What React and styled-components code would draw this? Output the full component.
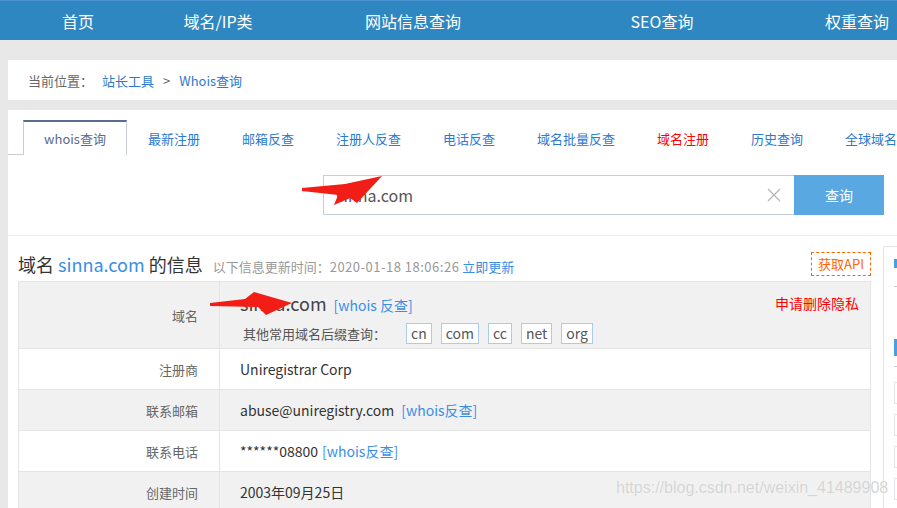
import React from 'react'
import styled, { createGlobalStyle } from 'styled-components'

const GlobalStyle = createGlobalStyle`
  html, body {
    margin: 0;
    padding: 0;
    background: #e8e8e8;
    overflow: hidden;
    font-family: "Microsoft YaHei", "Noto Sans CJK SC", sans-serif;
  }
`

const navItems = [
  { label: '首页', width: 156 },
  { label: '域名/IP类', width: 124 },
  { label: '网站信息查询', width: 266 },
  { label: 'SEO查询', width: 232 },
  { label: '权重查询', width: 158 },
]

const tabs = [
  { label: 'whois查询', active: true },
  { label: '最新注册' },
  { label: '邮箱反查' },
  { label: '注册人反查' },
  { label: '电话反查' },
  { label: '域名批量反查' },
  { label: '域名注册', hot: true },
  { label: '历史查询' },
  { label: '全球域名' },
]

const suffixes = ['cn', 'com', 'cc', 'net', 'org']

export default function App() {
  return (
    <Page>
      <GlobalStyle />
      <TopNav>
        {navItems.map(item => (
          <NavItem key={item.label} $w={item.width}>{item.label}</NavItem>
        ))}
      </TopNav>

      <Wrap>
        <Breadcrumb>
          <Crumb>当前位置：</Crumb>
          <CrumbLink>站长工具</CrumbLink>
          <Crumb>&gt;</Crumb>
          <CrumbLink>Whois查询</CrumbLink>
        </Breadcrumb>

        <Panel>
          <TabBar>
            {tabs.map(t => (
              <Tab key={t.label} $active={t.active} $hot={t.hot}>{t.label}</Tab>
            ))}
          </TabBar>

          <SearchRow>
            <InputBox>
              <SearchText>sinna.com</SearchText>
              <svg width="14" height="14" viewBox="0 0 14 14">
                <path d="M1 1 L13 13 M13 1 L1 13" stroke="#b5b5b5" strokeWidth="1.2" fill="none" />
              </svg>
            </InputBox>
            <SearchButton>查询</SearchButton>
          </SearchRow>

          <Content>
            <Main>
              <TitleRow>
                <Title>
                  域名 <Blue>sinna.com</Blue> 的信息
                  <SubTitle>以下信息更新时间：<Stamp>2020-01-18 18:06:26</Stamp> <Blue>立即更新</Blue></SubTitle>
                </Title>
                <ApiButton>获取API</ApiButton>
              </TitleRow>

              <InfoTable>
                <Row $alt>
                  <Label>域名</Label>
                  <Value $tall>
                    <DomainLine>
                      <span>
                        <Domain>sinna.com</Domain>
                        <SmallLink>[whois 反查]</SmallLink>
                      </span>
                      <Privacy>申请删除隐私</Privacy>
                    </DomainLine>
                    <SuffixLine>
                      <SuffixLabel>其他常用域名后缀查询：</SuffixLabel>
                      {suffixes.map(s => <Suffix key={s}>{s}</Suffix>)}
                    </SuffixLine>
                  </Value>
                </Row>
                <Row>
                  <Label>注册商</Label>
                  <Value>Uniregistrar Corp</Value>
                </Row>
                <Row $alt>
                  <Label>联系邮箱</Label>
                  <Value>abuse@uniregistry.com<SmallLink>[whois反查]</SmallLink></Value>
                </Row>
                <Row>
                  <Label>联系电话</Label>
                  <Value>******08800<SmallLink $near>[whois反查]</SmallLink></Value>
                </Row>
                <Row $alt>
                  <Label>创建时间</Label>
                  <Value>2003年09月25日</Value>
                </Row>
              </InfoTable>
            </Main>

            <Sidebar>
              <SideHead $h={9} />
              <SideRule $gap={18} />
              <SideHead $h={17} $top={52} />
              <SideRule $gap={10} />
              <SideBox />
              <SideBox />
              <SideBox />
              <SideBox />
            </Sidebar>
          </Content>
        </Panel>
      </Wrap>

      <Marks width="897" height="508" viewBox="0 0 897 508">
        <polygon fill="#f21d17" points="302,188 345,184 382,176 357,203 350,198 334,205 338,195 302,191" />
        <polygon fill="#f21d17" points="210,303 245,299 254,292 292,303 266,315 258,307 210,306" />
      </Marks>
      <Watermark>https://blog.csdn.net/weixin_41489908</Watermark>
    </Page>
  )
}

const Page = styled.div`
  position: relative;
  width: 897px;
  height: 508px;
  overflow: hidden;
`

const TopNav = styled.div`
  display: flex;
  height: 39px;
  background: #2f87c1;
  border-top: 1px solid #4a92d4;
  width: 1100px;
`

const NavItem = styled.div`
  width: ${p => p.$w}px;
  flex: none;
  text-align: center;
  line-height: 40px;
  color: #fff;
  font-size: 16px;
`

const Wrap = styled.div`
  padding: 20px 0 0 8px;
  width: 1100px;
`

const Breadcrumb = styled.div`
  display: flex;
  align-items: center;
  gap: 9px;
  height: 40px;
  padding-left: 20px;
  background: #fff;
  font-size: 13px;
`

const Crumb = styled.span`
  color: #666;
`

const CrumbLink = styled.span`
  color: #2a7ad0;
`

const Panel = styled.div`
  margin-top: 10px;
  background: #fff;
  height: 420px;
`

const TabBar = styled.div`
  display: flex;
  padding: 10px 0 0 15px;
  border-bottom: 1px solid #c5cdd9;
`

const Tab = styled.div`
  flex: none;
  height: 33px;
  line-height: 34px;
  padding: 0 20px;
  min-width: ${p => (p.$active ? '62px' : '0')};
  text-align: center;
  font-size: 13px;
  color: ${p => (p.$active ? '#5b6b88' : p.$hot ? '#f00' : '#2a7ad0')};
  background: #fff;
  border: 1px solid ${p => (p.$active ? '#c5cdd9' : 'transparent')};
  border-top: 2px solid ${p => (p.$active ? '#5a6b8c' : 'transparent')};
  border-bottom: none;
  margin-bottom: -1px;
  position: relative;
`

const SearchRow = styled.div`
  display: flex;
  padding: 20px 0 20px 315px;
  border-bottom: 1px solid #eeeeee;
`

const InputBox = styled.div`
  display: flex;
  align-items: center;
  justify-content: space-between;
  box-sizing: border-box;
  width: 471px;
  height: 40px;
  padding: 0 13px 0 12px;
  border: 1px solid #c5cdd9;
  border-right: none;
`

const SearchText = styled.span`
  font-size: 16px;
  color: #555;
`

const SearchButton = styled.div`
  width: 90px;
  height: 40px;
  line-height: 40px;
  text-align: center;
  background: #5aa8e2;
  color: #fff;
  font-size: 14px;
`

const Content = styled.div`
  display: flex;
  align-items: flex-start;
  padding: 10px 0 0 10px;
`

const Main = styled.div`
  width: 853px;
  flex: none;
`

const TitleRow = styled.div`
  display: flex;
  align-items: center;
  justify-content: space-between;
  height: 35px;
`

const Title = styled.div`
  font-size: 18px;
  color: #333;
`

const Blue = styled.span`
  color: #3a8ee6;
`

const SubTitle = styled.span`
  margin-left: 10px;
  font-size: 13px;
  color: #999;
`

const Stamp = styled.span`
  letter-spacing: 0.5px;
`

const ApiButton = styled.div`
  box-sizing: border-box;
  height: 24px;
  line-height: 22px;
  padding: 0 6px;
  border: 1px dashed #f60;
  color: #f60;
  font-size: 13px;
`

const InfoTable = styled.div`
  border: 1px solid #e5e5e5;
  border-bottom: none;
`

const Row = styled.div`
  display: grid;
  grid-template-columns: 201px 1fr;
  border-bottom: 1px solid #e5e5e5;
  background: ${p => (p.$alt ? '#f1f1f1' : '#fff')};
`

const Label = styled.div`
  display: flex;
  align-items: center;
  justify-content: flex-end;
  padding-right: 21px;
  border-right: 1px solid #e5e5e5;
  font-size: 13px;
  color: #666;
`

const Value = styled.div`
  display: ${p => (p.$tall ? 'block' : 'flex')};
  align-items: center;
  height: ${p => (p.$tall ? 'auto' : '40px')};
  padding: ${p => (p.$tall ? '8px 11px 4px 20px' : '0 20px')};
  font-size: 14px;
  color: #333;
`

const DomainLine = styled.div`
  display: flex;
  align-items: center;
  justify-content: space-between;
  height: 26px;
`

const Domain = styled.span`
  font-size: 18px;
  color: #444;
`

const SmallLink = styled.span`
  margin-left: ${p => (p.$near ? '4px' : '7px')};
  font-size: 14px;
  color: #3a8ee6;
`

const Privacy = styled.span`
  font-size: 14px;
  color: #f00;
`

const SuffixLine = styled.div`
  display: flex;
  align-items: center;
  margin-top: 7px;
  padding-left: 3px;
`

const SuffixLabel = styled.span`
  font-size: 13px;
  color: #555;
  margin-right: 20px;
`

const Suffix = styled.span`
  box-sizing: border-box;
  height: 21px;
  line-height: 19px;
  padding: 0 4px;
  margin-right: 9px;
  border: 1px solid #a9cde9;
  font-size: 14px;
  color: #555;
  background: #fff;
`

const Sidebar = styled.div`
  flex: none;
  width: 250px;
  height: 300px;
  margin-left: 12px;
  padding: 12px 10px;
  border: 1px solid #e5e5e5;
`

const SideHead = styled.div`
  width: 6px;
  height: ${p => p.$h}px;
  margin-top: ${p => p.$top || 0}px;
  background: #4a9ee2;
`

const SideRule = styled.div`
  width: 230px;
  height: 1px;
  margin: ${p => p.$gap}px 0 15px;
  background: #c8ccd4;
`

const SideBox = styled.div`
  width: 230px;
  height: 20px;
  margin-bottom: 10px;
  border: 1px solid #e3e6ee;
`

const Marks = styled.svg`
  position: absolute;
  left: 0;
  top: 0;
  pointer-events: none;
`

const Watermark = styled.div`
  position: absolute;
  left: 616px;
  top: 479px;
  font-family: "Liberation Sans", Arial, sans-serif;
  font-size: 16px;
  color: rgba(205, 205, 205, 0.85);
  text-shadow: 0 0 1px rgba(255, 255, 255, 0.9);
  white-space: nowrap;
  pointer-events: none;
`
